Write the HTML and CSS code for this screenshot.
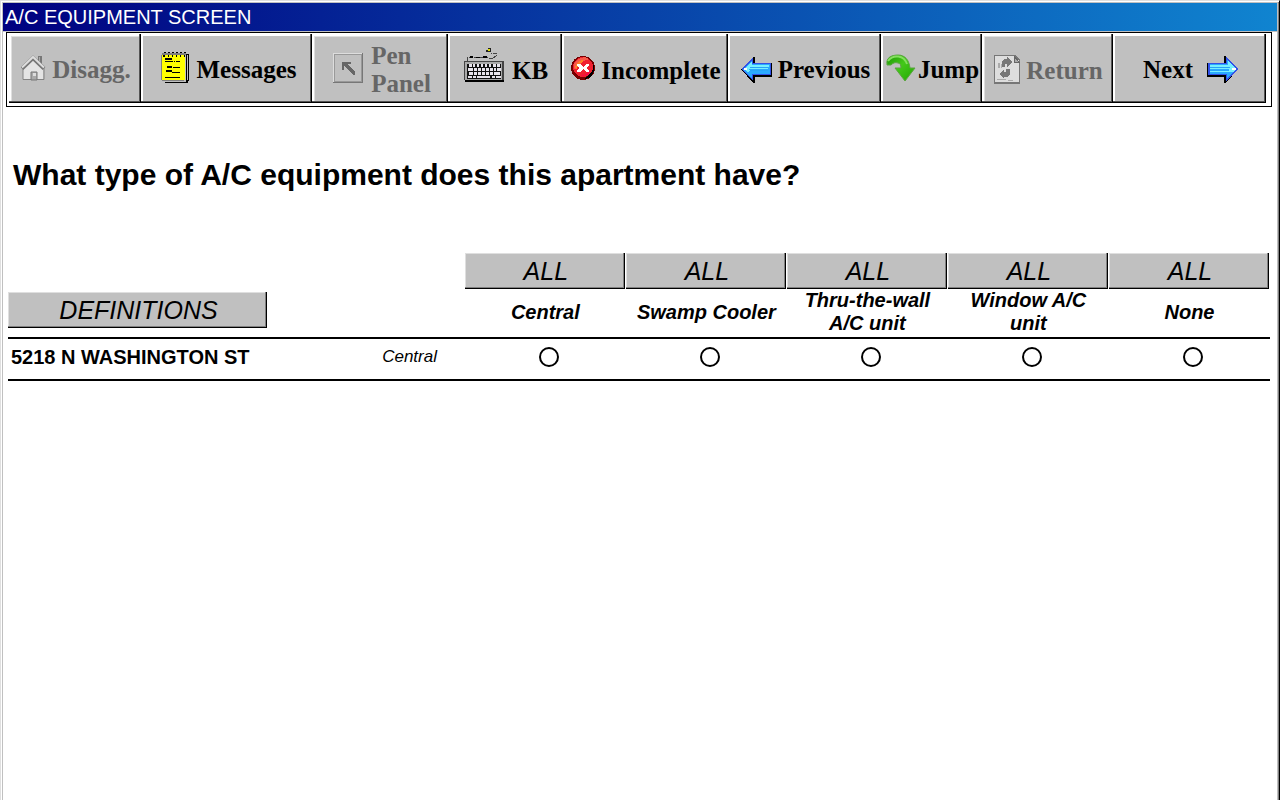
FILE: index.html
```html
<!DOCTYPE html>
<html lang="en">
<head>
<meta charset="utf-8">
<meta name="viewport" content="width=device-width, initial-scale=1">
<title>A/C Equipment Screen</title>
<link rel="stylesheet" href="styles.css">
</head>
<body>
<div class="window">
  <header class="titlebar">A/C EQUIPMENT SCREEN</header>

  <nav class="toolbar" aria-label="Survey actions">
    <button class="tool" type="button" disabled>
      <svg class="icon-raised" width="25" height="26" viewBox="0 0 25 26" aria-hidden="true">
        <path d="M17 1h4v10h-4z" fill="#777"/><path d="M18 2h1v8h-1z" fill="#aaa"/>
        <path d="M3 13L12 4l10 9v12H2V13z" fill="#e4e4e4"/>
        <path d="M2 14v10.500h21V13" fill="none" stroke="#848484"/>
        <path d="M1 13.500L12 3l11 10.500" fill="none" stroke="#777" stroke-width="4"/>
        <path d="M1 12.500L12 2l11 10.500" fill="none" stroke="#ddd" stroke-width="2"/>
        <path d="M10 17h6v8h-6z" fill="#aaa" stroke="#777"/><path d="M12 18h3v3h-3z" fill="#ddd"/>
      </svg>
      <span>Disagg.</span>
    </button>
    <button class="tool tool-wide-gap" type="button">
      <svg class="icon-raised" width="28" height="32" viewBox="0 0 28 32" shape-rendering="crispEdges" aria-hidden="true">
        <path d="M3 2h25v27h-1v2H4v-2H1V4h2z" fill="#000"/>
        <path d="M2 3h23v27H4v-2H1V4z" fill="#c0c0c0"/>
        <path d="M1 3h23v25H1z" fill="#ff0"/><path d="M0 3h1v25H0zM1 28h22v1H1z" fill="#808080"/>
        <path d="M26 3h1v25h-1z" fill="#c0c0c0"/>
        <path d="M1 1h24v2H1z" fill="#808080"/>
        <path d="M3 0h2v1H3zm4 0h2v1H7zm4 0h2v1h-2zm4 0h2v1h-2zm4 0h2v1h-2zm4 0h2v1h-2zM2 3h2v2H2zm5 0h1v2H7zm4 0h1v2h-1zm4 0h1v2h-1zm4 0h1v2h-1zm4 0h1v2h-1zM4 6h7v2H4zm0 3h8v1H4zm9 0h1v1h-1zm2 0h4v1h-4zM6 14h5v2H6zm6 1h7v1h-7zM5 18h6v2H5zm6 2h8v1h-8zM4 25h15v1H4z"/>
      </svg>
      <span>Messages</span>
    </button>
    <button class="tool tool-wide-gap" type="button" disabled>
      <svg class="icon-raised" width="30" height="30" viewBox="0 0 30 30" shape-rendering="crispEdges" aria-hidden="true">
        <path d="M0 0h30v30H0z" fill="#777"/><path d="M0 0h29v29H0z" fill="#ddd"/>
        <path d="M1 1h28v28H1z" fill="#999"/><path d="M2 2h26v26H2z" fill="#c0c0c0"/>
        <path d="M9 9h9v2h-4l8 8v3h-2l-9-9v4H9z" fill="#666"/>
      </svg>
      <span>Pen<br>Panel</span>
    </button>
    <button class="tool tool-keyboard" type="button">
      <svg width="40" height="36" viewBox="0 0 40 36" shape-rendering="crispEdges" aria-hidden="true">
        <path d="M3 14v-3l2-1h17l2 1h5l3-2V6h-5" fill="none" stroke="#444" stroke-dasharray="4 1"/>
        <path d="M6 9h3v2H6zm6 1h4v1h-4zm7-1h4v2h-4z"/>
        <path d="M22 3h2V1h3v4h-5z" fill="#222"/><path d="M24 2h2v2h-2z" fill="#dd0"/>
        <path d="M0 14h40v19H0z" fill="#444"/><path d="M1 15h37v18H1z" fill="#aaa"/>
        <path d="M1 33h39v2H1z"/>
        <path d="M3 17h34v15H3z" fill="#111"/>
        <path d="M5 17h3v3H5zm4 0h2v3H9zm4 0h2v3h-2zm4 0h2v3h-2zm4 0h2v3h-2zm4 0h2v3h-2zm4 0h3v3h-3zm4 0h3v3h-3zM4 21h5v3H4zm6 0h3v3h-3zm4 0h3v3h-3zm4 0h3v3h-3zm4 0h3v3h-3zm4 0h3v3h-3zm4 0h2v3h-2zm3 0h4v3h-4zM5 25h4v3H5zm5 0h3v3h-3zm4 0h3v3h-3zm4 0h3v3h-3zm4 0h3v3h-3zm4 0h3v3h-3zm4 0h6v3h-6zM4 29h4v2H4zm5 0h3v2H9zm4 0h13v2H13zm15 0h3v2h-3zm4 0h5v2h-5z" fill="#e8e4ec"/>
      </svg>
      <span class="caption-low">KB</span>
    </button>
    <button class="tool" type="button">
      <svg class="icon-raised" width="24" height="24" viewBox="0 0 24 24" shape-rendering="crispEdges" aria-hidden="true">
        <circle cx="12" cy="12" r="12" fill="#700"/><path d="M14 23l6-2 3-6V7l-2 8-7 7z"/>
        <circle cx="12" cy="11" r="10" fill="#f02030"/>
        <path d="M3 13V7l4-4 7-2 4 2-7 3-6 7z" fill="#f75a4a"/>
        <path d="M4 11l2-4 5-3 2 1-6 4-1 5z" fill="#ff8128"/>
        <path d="M9 20l8-1 3-6-5 5z" fill="#ff004c"/>
        <path d="M6 8h3l3 3 3-3h3v2l-3 2 3 2v2h-3l-3-3-3 3H6v-2l3-2-3-2z" fill="#fff"/>
      </svg>
      <span class="caption-low">Incomplete</span>
    </button>
    <button class="tool" type="button">
      <svg width="31" height="26" viewBox="0 0 31 26" shape-rendering="crispEdges" aria-hidden="true">
        <path d="M0 12L12 0h2v6h17v14H14v6h-2z"/>
        <path d="M0 12L12 1v5h18v12H12v6z" fill="#3152e8"/>
        <path d="M2 12l9-8v3h18v10H11v5z" fill="#2aaaff"/>
        <path d="M3 12l8-7v3h17v2H9v1h18v1H8v1h19v1H8v1H6z" fill="#78f0ff"/>
        <path d="M9 10h18v1H9zm0 3h18v1H9z" fill="#28a4f8"/><path d="M3 11h3v2H3z" fill="#fff"/>
      </svg>
      <span>Previous</span>
    </button>
    <button class="tool tool-tight-gap" type="button">
      <svg class="icon-raised" width="30" height="28" viewBox="0 0 30 28" aria-hidden="true">
        <defs><linearGradient id="jump-green" x1="0" y1="0" x2="1" y2="1"><stop offset="0" stop-color="#1c9604"/><stop offset=".45" stop-color="#44c81a"/><stop offset="1" stop-color="#20a700"/></linearGradient></defs>
        <path d="M1 10C0 4 5 1 12 1c7 0 11 5 12 13h5L19 27 9 14h6c0-3-1-5-3-5-3-1-5 0-7 2H1z" fill="url(#jump-green)" stroke="#5aa540"/>
        <path d="M2 7C7 0 18 1 21 10" fill="none" stroke="#84e05f" stroke-width="2"/>
      </svg>
      <span>Jump</span>
    </button>
    <button class="tool" type="button" disabled>
      <svg width="26" height="29" viewBox="0 0 26 29" shape-rendering="crispEdges" aria-hidden="true">
        <path d="M0 0h21l5 5v24H0z" fill="#777"/><path d="M1 1h19l5 5v21H1z" fill="#ddd"/>
        <path d="M20 1v6h5z" fill="#aaa" stroke="#666"/>
        <path d="M8 12V6l2-2h3V2l6 5-6 5V9h-2v3zM16 14v5l-3 3h-3v2l-5-5 5-5v3h2v-3z" fill="#777"/>
        <path d="M4 8h2v5H4zm3 1h1v4H7zm-4 15h9v1H3zm11 1h5v1h-5z" fill="#aaa"/>
      </svg>
      <span class="caption-low">Return</span>
    </button>
    <button class="tool tool-next" type="button">
      <span>Next</span>
      <svg width="31" height="27" viewBox="0 0 31 27" shape-rendering="crispEdges" aria-hidden="true">
        <path d="M0 7h17V0h2l12 13-12 14h-2v-6H0z"/>
        <path d="M1 7h18V1l12 12-12 12v-6H1z" fill="#3152e8"/>
        <path d="M3 8h17V4l9 9-9 10v-5H3z" fill="#2aaaff"/>
        <path d="M3 9h18V5l8 8-3 3H3v-2h19v-1H3v-1h20v-1H3z" fill="#78f0ff"/>
        <path d="M3 11h19v1H3zm0 3h19v1H3z" fill="#28a4f8"/><path d="M25 12h4v2h-4z" fill="#fff"/>
      </svg>
    </button>
  </nav>

  <main class="content">
    <h1 class="question">What type of A/C equipment does this apartment have?</h1>

    <table class="answers">
      <colgroup><col class="col-address"><col class="col-current"><col><col><col><col><col></colgroup>
      <thead>
        <tr>
          <th class="definitions-cell" colspan="2"><button class="bevel definitions" type="button">DEFINITIONS</button></th>
          <th scope="col"><button class="bevel all" type="button">ALL</button><div class="choice" id="central">Central</div></th>
          <th scope="col"><button class="bevel all" type="button">ALL</button><div class="choice" id="swamp">Swamp Cooler</div></th>
          <th scope="col"><button class="bevel all" type="button">ALL</button><div class="choice" id="wall">Thru-the-wall A/C unit</div></th>
          <th scope="col"><button class="bevel all" type="button">ALL</button><div class="choice" id="window">Window A/C unit</div></th>
          <th scope="col"><button class="bevel all" type="button">ALL</button><div class="choice" id="none">None</div></th>
        </tr>
      </thead>
      <tbody>
        <tr>
          <th class="address" scope="row" id="address">5218 N WASHINGTON ST</th>
          <td class="current">Central</td>
          <td class="pick"><input class="option" type="radio" name="equipment" value="central" aria-labelledby="address central"></td>
          <td class="pick"><input class="option" type="radio" name="equipment" value="swamp" aria-labelledby="address swamp"></td>
          <td class="pick"><input class="option" type="radio" name="equipment" value="wall" aria-labelledby="address wall"></td>
          <td class="pick"><input class="option" type="radio" name="equipment" value="window" aria-labelledby="address window"></td>
          <td class="pick"><input class="option" type="radio" name="equipment" value="none" aria-labelledby="address none"></td>
        </tr>
      </tbody>
    </table>
  </main>
</div>
</body>
</html>
```
FILE: styles.css
```css
* {
  box-sizing: border-box;
}

body {
  margin: 0;
  background: #fff;
  color: #000;
  font-family: "Liberation Sans", Arial, sans-serif;
}

.window {
  min-height: 100vh;
  padding: 2px 2px 0;
  border-top: 1px solid #dfdfdf;
  border-left: 1px solid #dfdfdf;
  border-right: 1px solid #000;
  box-shadow: inset 1px 1px #fff, inset -1px 0 #808080, inset 2px 2px #c0c0c0, inset -2px 0 #c0c0c0;
}

.titlebar {
  padding: 0 2px;
  border-bottom: 1px solid #c0c0c0;
  background: linear-gradient(to right, #000080, #1084d0);
  color: #fff;
  font-size: 20px;
  line-height: 28px;
}

.toolbar {
  display: grid;
  grid-template-columns: 132fr 171fr 136fr 114fr 166fr 153fr 101fr 131fr 153fr;
  margin: 0 5px 0 3px;
  padding: 1px 5px 3px 2px;
  border: 1px solid #000;
}

.tool {
  display: flex;
  align-items: center;
  justify-content: center;
  gap: 6px;
  min-width: 0;
  min-height: 69px;
  padding: 2px 0 0 2px;
  border: 0;
  background: #c0c0c0;
  box-shadow: inset -1px -1px #000, inset -2px -2px #555, inset 2px 2px #fff;
  color: #000;
  font-family: "Liberation Serif", "Times New Roman", serif;
  font-size: 25px;
  font-weight: 700;
  line-height: 28px;
  text-align: left;
}

.tool:disabled {
  color: #666;
  box-shadow: inset -1px -1px #000, inset -2px -2px #555, inset 2px 2px #fff, inset 3px 3px #dfdfdf;
}

.tool svg {
  flex: none;
}

.tool-wide-gap,
.tool-keyboard {
  gap: 8px;
}

.tool-wide-gap {
  padding-left: 4px;
}

.tool-keyboard svg {
  margin-bottom: 10px;
}

.tool .icon-raised {
  margin-bottom: 4px;
}

.caption-low {
  padding-top: 2px;
}

.tool-tight-gap {
  gap: 2px;
}

.tool-next {
  gap: 14px;
}

.content {
  padding: 50px 7px 0 5px;
}

.question {
  margin: 0 0 60px;
  padding-left: 5px;
  font-size: 30px;
  line-height: 36px;
}

.answers {
  width: 100%;
  border-spacing: 0;
  table-layout: fixed;
}

.col-address {
  width: 28%;
}

.col-current {
  width: 8.2%;
}

.answers th,
.answers td {
  padding: 0;
  border-bottom: 2px solid #000;
  text-align: center;
}

.bevel {
  display: block;
  height: 36px;
  padding: 0 0 0 2px;
  border: 0;
  background: #c0c0c0;
  box-shadow: inset -1px -1px #000, inset -2px -2px #808080, inset 1px 1px #dfdfdf;
  font-family: inherit;
  font-size: 25px;
  font-style: italic;
  line-height: 36px;
}

.all {
  width: calc(100% - 1px);
}

.answers .definitions-cell {
  padding-bottom: 9px;
  vertical-align: bottom;
}

.definitions {
  width: 259px;
}

.choice {
  display: flex;
  align-items: center;
  justify-content: center;
  min-height: 48px;
  padding: 0 10px 2px;
  font-size: 20px;
  font-style: italic;
  line-height: 23px;
}

.answers tbody th,
.answers tbody td {
  height: 42px;
  padding-bottom: 4px;
}

.answers .address {
  padding-left: 3px;
  font-size: 20px;
  text-align: left;
}

.answers .current {
  padding-right: 7px;
  font-size: 17px;
  font-style: italic;
}

.answers .pick {
  padding-left: 8px;
}

.option {
  display: block;
  width: 20px;
  height: 20px;
  margin: 0 auto;
  border: 2px solid #000;
  border-radius: 50%;
  appearance: none;
  background: #fff;
}

.option:checked {
  background: radial-gradient(circle, #000 0 4px, #fff 5px);
}
```
